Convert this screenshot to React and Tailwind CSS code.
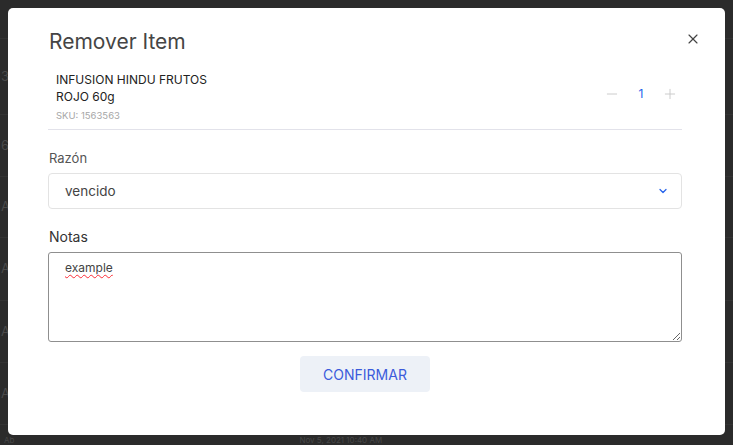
import { ChevronDown, Minus, Plus, X } from 'lucide-react';

const rows = [
  { h: 'h-[39px]', left: '' },
  { h: 'h-[76px]', left: '3' },
  { h: 'h-[62px]', left: '6' },
  { h: 'h-[61px]', left: 'A' },
  { h: 'h-[63px]', left: 'A' },
  { h: 'h-[62px]', left: 'A' },
  { h: 'h-[62px]', left: 'A' },
];

export default function App() {
  return (
    <div
      className="relative w-[733px] h-[445px] overflow-hidden bg-[#2b2b2b]"
      style={{ fontFamily: 'Inter, "Noto Sans", Arial, sans-serif' }}
    >
      {/* Background page (dimmed) */}
      <div className="flex flex-col">
        {rows.map((r, i) => (
          <div key={i} className={`${r.h} flex items-center border-b border-[#333333] pl-[1px] text-[13px] text-[#4a4a4a]`}>
            {r.left}
          </div>
        ))}
        <div className="flex pl-1 pt-[11px] text-[8px] leading-[8px] text-[#474747]">
          <span>Ab</span>
          <span className="ml-[285px]">Nov 5, 2021 10:40 AM</span>
        </div>
      </div>

      {/* Modal overlay */}
      <div className="absolute inset-0 flex items-start justify-center pt-2">
        <div className="relative w-[717px] h-[427px] bg-white rounded-[5px] pl-[40px] pr-[43px] pt-[20px]">
          <button className="absolute right-[24px] top-[23px] text-[#444]">
            <X className="w-[16px] h-[16px]" strokeWidth={1.75} />
          </button>

          <h2 className="text-[21px] leading-[28px] text-[#454545] pl-px">Remover Item</h2>

          {/* Item row */}
          <div className="mt-[15px] flex items-center justify-between border-b border-[#e2e2ea] pb-[6px] pl-[8px] pr-[4px]">
            <div>
              <p className="text-[12px] leading-[17px] text-[#222]">
                INFUSION HINDU FRUTOS
                <br />
                ROJO 60g
              </p>
              <p className="mt-[4px] text-[9.5px] leading-[14px] text-[#a6a6a6]">SKU: 1563563</p>
            </div>
            <div className="flex items-center gap-[14px] mt-[-6px]">
              <Minus className="w-[16px] h-[16px] text-[#c8c8c8]" strokeWidth={1.4} />
              <span className="w[14px] w-[14px] text-center text-[12px] text-[#2563eb]">1</span>
              <Plus className="w-[16px] h-[16px] text-[#c8c8c8]" strokeWidth={1.4} />
            </div>
          </div>

          {/* Razón */}
          <label className="block mt-[19px] text-[13px] leading-[18px] text-[#555] pl-px">Razón</label>
          <div className="mt-[6px] flex h-[36px] items-center justify-between rounded-[4px] border border-[#e3e3e3] pl-[16px] pr-[12px]">
            <span className="text-[13.5px] text-[#444]">vencido</span>
            <ChevronDown className="w-[12px] h-[12px] text-[#2563eb]" strokeWidth={2.5} />
          </div>

          {/* Notas */}
          <label className="block mt-[19px] text-[14px] leading-[18px] text-[#333] pl-px">Notas</label>
          <textarea
            defaultValue="example"
            spellCheck={false}
            className="mt-[6px] block h-[90px] w-full resize-y rounded-[3px] border border-[#8f8f8f] px-[16px] py-[6px] text-[12px] leading-[18px] text-[#444] outline-none underline decoration-wavy decoration-red-500 decoration-1 underline-offset-2"
            style={{ fontFamily: 'Inter, Arial, sans-serif' }}
          />

          <div className="mt-[14px] flex justify-center">
            <button className="h-[36px] w-[130px] rounded-[4px] bg-[#edf1f7] text-[14px] text-[#3b5bdb]">
              CONFIRMAR
            </button>
          </div>
        </div>
      </div>
    </div>
  );
}
